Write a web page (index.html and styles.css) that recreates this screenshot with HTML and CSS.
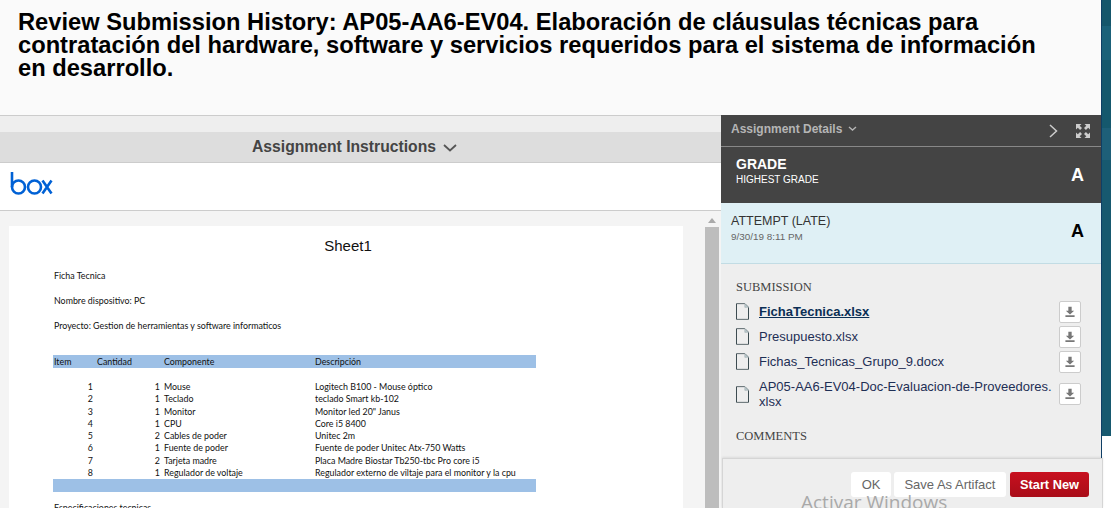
FILE: index.html
```html
<!DOCTYPE html>
<html>
<head>
    <title>Review Submission History</title>
    <link rel="stylesheet" href="styles.css">
</head>
<body>
    <div class="content">
        <header class="page-head">
            <h1>Review Submission History: AP05-AA6-EV04. Elaboración de cláusulas técnicas para contratación del hardware, software y servicios requeridos para el sistema de información en desarrollo.</h1>
        </header>

        <div class="main">
            <section class="left">
                <div class="left-gap"></div>
                <div class="instructions-bar">
                    Assignment Instructions
                    <svg class="instructions-chevron" width="14" height="8" viewBox="0 0 14 8"><path d="M1 1l6 5.5L13 1" fill="none" stroke="#555" stroke-width="1.8"/></svg>
                </div>
                <div class="box-bar">
                    <svg width="43" height="24" viewBox="0 0 43 24">
                        <g fill="none" stroke="#0061d5" stroke-width="2.6">
                            <path d="M2 0v15"/>
                            <circle cx="8.5" cy="15" r="6.5"/>
                            <circle cx="24.5" cy="15" r="6.5"/>
                            <path d="M32.5 8.500l9 13M41.500 8.500l-9 13"/>
                        </g>
                    </svg>
                </div>
                <div class="viewer">
                    <div class="sheet">
                        <div class="sheet-title">Sheet1</div>
                        <p class="sheet-line first">Ficha Tecnica</p>
                        <p class="sheet-line">Nombre dispositivo: PC</p>
                        <p class="sheet-line">Proyecto: Gestion de herramientas y software informaticos</p>
                        <div class="sheet-table">
                            <div class="sheet-band">
                                <span>Item</span><span>Cantidad</span><span>Componente</span><span>Descripción</span>
                            </div>
                            <div class="sheet-row"><span>1</span><span>1</span><span>Mouse</span><span>Logitech B100 - Mouse óptico</span></div>
                            <div class="sheet-row"><span>2</span><span>1</span><span>Teclado</span><span>teclado Smart kb-102</span></div>
                            <div class="sheet-row"><span>3</span><span>1</span><span>Monitor</span><span>Monitor led 20" Janus</span></div>
                            <div class="sheet-row"><span>4</span><span>1</span><span>CPU</span><span>Core i5 8400</span></div>
                            <div class="sheet-row"><span>5</span><span>2</span><span>Cables de poder</span><span>Unitec 2m</span></div>
                            <div class="sheet-row"><span>6</span><span>1</span><span>Fuente de poder</span><span>Fuente de poder Unitec Atx-750 Watts</span></div>
                            <div class="sheet-row"><span>7</span><span>2</span><span>Tarjeta madre</span><span>Placa Madre Biostar Tb250-tbc Pro core i5</span></div>
                            <div class="sheet-row"><span>8</span><span>1</span><span>Regulador de voltaje</span><span>Regulador externo de viltaje para el monitor y la cpu</span></div>
                            <div class="sheet-band empty"></div>
                        </div>
                        <p class="sheet-line last">Especificaciones tecnicas</p>
                    </div>
                    <div class="scrollbar">
                        <div class="scroll-arrow"></div>
                        <div class="scroll-thumb"></div>
                    </div>
                </div>
            </section>

            <aside class="details">
                <div class="details-bar">
                    <span class="details-title">Assignment Details</span>
                    <svg class="details-chevron" width="9" height="6" viewBox="0 0 9 6"><path d="M1 1l3.5 3L8 1" fill="none" stroke="#b5b5b5" stroke-width="1.4"/></svg>
                    <svg class="details-next" width="9" height="14" viewBox="0 0 9 14"><path d="M1 1l6.5 6L1 13" fill="none" stroke="#ccc" stroke-width="1.5"/></svg>
                    <svg width="16" height="16" viewBox="0 0 16 16" fill="#ccc">
                        <path d="M1 1h5.500L4.700 2.800 7 5.100 5.100 7 2.800 4.700 1 6.500z"/>
                        <path d="M15 1v5.500l-1.800-1.800L10.900 7 9 5.100l2.300-2.300L9.500 1z"/>
                        <path d="M1 15V9.500l1.800 1.800L5.100 9 7 10.900l-2.300 2.300L6.500 15z"/>
                        <path d="M15 15H9.500l1.800-1.800L9 10.900 10.900 9l2.300 2.300L15 9.500z"/>
                    </svg>
                </div>
                <div class="grade">
                    <div>
                        <div class="grade-label">GRADE</div>
                        <div class="grade-sub">HIGHEST GRADE</div>
                    </div>
                    <div class="grade-value">A</div>
                </div>
                <div class="attempt">
                    <div>
                        <div class="attempt-label">ATTEMPT (LATE)</div>
                        <div class="attempt-date">9/30/19 8:11 PM</div>
                    </div>
                    <div class="attempt-value">A</div>
                </div>
                <div class="submission">
                    <h2 class="section-title">SUBMISSION</h2>
                    <ul class="files">
                        <li class="file">
                            <svg class="file-icon" width="13" height="17" viewBox="0 0 14 18"><use href="#doc"/></svg>
                            <a class="file-name current">FichaTecnica.xlsx</a>
                            <button class="download"><svg width="10" height="12" viewBox="0 0 12 13"><use href="#down"/></svg></button>
                        </li>
                        <li class="file">
                            <svg class="file-icon" width="13" height="17" viewBox="0 0 14 18"><use href="#doc"/></svg>
                            <a class="file-name">Presupuesto.xlsx</a>
                            <button class="download"><svg width="10" height="12" viewBox="0 0 12 13"><use href="#down"/></svg></button>
                        </li>
                        <li class="file">
                            <svg class="file-icon" width="13" height="17" viewBox="0 0 14 18"><use href="#doc"/></svg>
                            <a class="file-name">Fichas_Tecnicas_Grupo_9.docx</a>
                            <button class="download"><svg width="10" height="12" viewBox="0 0 12 13"><use href="#down"/></svg></button>
                        </li>
                        <li class="file long">
                            <svg class="file-icon" width="13" height="17" viewBox="0 0 14 18"><use href="#doc"/></svg>
                            <a class="file-name">AP05-AA6-EV04-Doc-Evaluacion-de-Proveedores.<br>xlsx</a>
                            <button class="download"><svg width="10" height="12" viewBox="0 0 12 13"><use href="#down"/></svg></button>
                        </li>
                    </ul>
                    <h2 class="section-title comments">COMMENTS</h2>
                </div>
                <div class="actions">
                    <button class="btn">OK</button>
                    <button class="btn">Save As Artifact</button>
                    <button class="btn primary">Start New</button>
                    <span class="watermark">Activar Windows</span>
                </div>
            </aside>
        </div>
    </div>

    <div class="edge"></div>

    <svg width="0" height="0" class="defs">
        <defs>
            <linearGradient id="docfill" x1="0" y1="0" x2="0" y2="1">
                <stop offset="0" stop-color="#f8fbfb"/>
                <stop offset="1" stop-color="#d3eaec"/>
            </linearGradient>
            <symbol id="doc" viewBox="0 0 14 18">
                <path d="M.5.5h9l4 4v13H.5z" fill="url(#docfill)" stroke="#26373d"/>
                <path d="M9.500.5v4h4z" fill="#bcc9cc" stroke="#9aa8ab" stroke-width=".6"/>
            </symbol>
            <symbol id="down" viewBox="0 0 12 13">
                <path d="M4 0h4v5h3L6 9.500 1 5h3z" fill="#777"/>
                <path d="M.5 11.500h11" stroke="#777" stroke-width="2"/>
            </symbol>
        </defs>
    </svg>
</body>
</html>
```

FILE: styles.css
```css
html, body {
    height: 100%;
    overflow: hidden;
}

body {
    font-family: "Liberation Sans", Arial, sans-serif;
    background-color: #fff;
    margin: 0;
    padding: 0;
    display: flex;
    align-items: flex-start;
}

.defs {
    display: none;
}

.content {
    width: 1101px;
    height: 100%;
    flex: none;
    display: flex;
    flex-direction: column;
}

.page-head {
    height: 116px;
    flex: none;
    box-sizing: border-box;
    background-color: #fafafa;
    border-bottom: 1px solid #ccc;
    padding: 11px 51px 0 18px;
}

h1 {
    margin: 0;
    font-size: 23.7px;
    line-height: 23px;
    font-weight: bold;
    color: #000;
}

.main {
    flex: 1;
    display: flex;
    min-height: 0;
}

.left {
    width: 721px;
    flex: none;
    display: flex;
    flex-direction: column;
    min-height: 0;
}

.left-gap {
    height: 16px;
    background-color: #eee;
}

.instructions-bar {
    height: 30px;
    background-color: #ddd;
    border-bottom: 1px solid #ccc;
    color: #444;
    font-size: 15.7px;
    font-weight: bold;
    display: flex;
    align-items: center;
    justify-content: center;
    padding-right: 12px;
}

.instructions-chevron {
    margin-left: 7px;
    margin-top: 2px;
}

.box-bar {
    height: 48px;
    box-sizing: border-box;
    background-color: #fff;
    border-bottom: 1px solid #ccc;
    padding: 9px 0 0 10px;
}

.viewer {
    flex: 1;
    background-color: #f4f4f4;
    display: flex;
    min-height: 0;
    padding-left: 9px;
    overflow: hidden;
}

.sheet {
    width: 674px;
    margin-top: 15px;
    height: 400px;
    background-color: #fff;
    box-sizing: border-box;
    padding-left: 44px;
    font-family: Lato, "Open Sans", sans-serif;
    font-size: 8.85px;
    color: #111;
}

.sheet-title {
    font-family: "Liberation Sans", Arial, sans-serif;
    font-size: 15px;
    text-align: center;
    color: #111;
    height: 16px;
    padding-top: 11px;
    margin-left: -40px;
}

.sheet-line {
    margin: 0;
    height: 25px;
    line-height: 10px;
    padding-left: 1px;
}

.sheet-line.first {
    margin-top: 18px;
}

.sheet-line.last {
    margin-top: 11px;
}

.sheet-table {
    width: 483px;
    margin-top: 9px;
}

.sheet-band,
.sheet-row {
    display: grid;
    grid-template-columns: 43px 67px 151px 222px;
}

.sheet-band {
    height: 13px;
    line-height: 13px;
    background-color: #9dc0e6;
    margin-bottom: 13px;
}

.sheet-band span {
    padding-left: 1px;
}

.sheet-band.empty {
    margin: 0;
}

.sheet-row {
    height: 12.3px;
    line-height: 12.3px;
}

.sheet-row span:nth-child(1),
.sheet-row span:nth-child(2) {
    text-align: right;
    padding-right: 3px;
}

.sheet-row span:nth-child(n+3) {
    padding-left: 1px;
}

.scrollbar {
    width: 15px;
    margin-left: 22px;
    margin-top: 2px;
    display: flex;
    flex-direction: column;
    flex: none;
}

.scroll-arrow {
    width: 0;
    height: 0;
    margin: 5px 0 4px 3px;
    border-left: 4px solid transparent;
    border-right: 4px solid transparent;
    border-bottom: 5px solid #aaa;
}

.scroll-thumb {
    flex: 1;
    width: 14px;
    background-color: #bdbdbd;
}

.details {
    width: 380px;
    flex: none;
    display: flex;
    flex-direction: column;
    background-color: #eee;
    position: relative;
    z-index: 1;
    min-height: 0;
    margin-top: -1px;
}

.details-bar {
    height: 32px;
    flex: none;
    box-sizing: border-box;
    background-color: #444;
    border-bottom: 1px solid #888;
    display: flex;
    align-items: center;
    padding: 0 10px;
}

.details-title {
    color: #b5b5b5;
    font-size: 12px;
    font-weight: bold;
    margin-bottom: 3px;
}

.details-chevron {
    margin-left: 6px;
    margin-bottom: 3px;
}

.details-next {
    margin-left: auto;
    margin-right: 17px;
}

.grade {
    height: 56px;
    flex: none;
    box-sizing: border-box;
    background-color: #444;
    color: #fff;
    display: flex;
    justify-content: space-between;
    padding: 9px 17px 0 15px;
}

.grade-label {
    font-size: 14px;
    font-weight: bold;
}

.grade-sub {
    font-size: 10px;
    margin-top: 2px;
}

.grade-value,
.attempt-value {
    font-size: 18px;
    font-weight: bold;
    margin-top: 9px;
}

.attempt {
    height: 61px;
    flex: none;
    box-sizing: border-box;
    background-color: #dff0f5;
    border-bottom: 1px solid #c2dce4;
    color: #333;
    display: flex;
    justify-content: space-between;
    padding: 11px 17px 0 10px;
}

.attempt-label {
    font-size: 12.5px;
}

.attempt-date {
    font-size: 9.9px;
    color: #666;
    margin-top: 3px;
}

.attempt-value {
    color: #000;
    margin-top: 7px;
}

.submission {
    flex: 1;
    padding: 16px 20px 0 15px;
    min-height: 0;
}

.section-title {
    margin: 0;
    font-family: "Liberation Serif", "Times New Roman", serif;
    font-size: 12.5px;
    font-weight: normal;
    color: #444;
    line-height: 14px;
}

.section-title.comments {
    margin-top: 20px;
}

.files {
    list-style: none;
    margin: 5px 0 0;
    padding: 0;
}

.file {
    display: flex;
    align-items: center;
    min-height: 25px;
}

.file.long {
    margin-top: 5px;
}

.file-icon {
    flex: none;
    margin-right: 10px;
}

.file-name {
    flex: 1;
    font-size: 13px;
    line-height: 15px;
    color: #1e2f55;
}

.file-name.current {
    font-weight: bold;
    text-decoration: underline;
    color: #0b2f55;
}

.download {
    flex: none;
    width: 22px;
    height: 22px;
    padding: 0;
    background-color: #fff;
    border: 1px solid #ccc;
    border-radius: 2px;
    display: flex;
    align-items: center;
    justify-content: center;
}

.actions {
    height: 50px;
    flex: none;
    box-sizing: border-box;
    background-color: #eee;
    border: 1px solid #d5d5d5;
    border-bottom: none;
    box-shadow: 0 -1px 2px rgba(0, 0, 0, 0.08);
    margin: 0 -2px 0 1px;
    display: flex;
    justify-content: flex-end;
    align-items: flex-start;
    gap: 3px;
    padding: 13px 13px 0 0;
    position: relative;
}

.btn {
    height: 25px;
    padding: 0 10.5px;
    background-color: #fff;
    color: #666;
    border: none;
    border-radius: 3px;
    font-family: "Liberation Sans", Arial, sans-serif;
    font-size: 13px;
}

.btn.primary {
    padding: 0 10px;
    margin-left: 1px;
    background-color: #b5111e;
    background-image: linear-gradient(#c8101f, #a90d19);
    color: #fff;
    font-weight: bold;
    font-size: 12.8px;
}

.watermark {
    position: absolute;
    left: 78px;
    top: 30px;
    font-family: "Open Sans", sans-serif;
    font-size: 19px;
    color: #a9a9a9;
    white-space: nowrap;
}

.edge {
    width: 10px;
    height: 458px;
    flex: none;
    box-sizing: border-box;
    border-left: 1px solid #0f3f66;
    background: linear-gradient(#15566b 0, #15566b 26px, #1b6179 26px, #1b6179 60px, #15586d 60px, #15586d 128px, #1e5f78 128px, #1e5f78 160px, #17596f 160px, #17596f 436px, #fff 436px);
}
```
